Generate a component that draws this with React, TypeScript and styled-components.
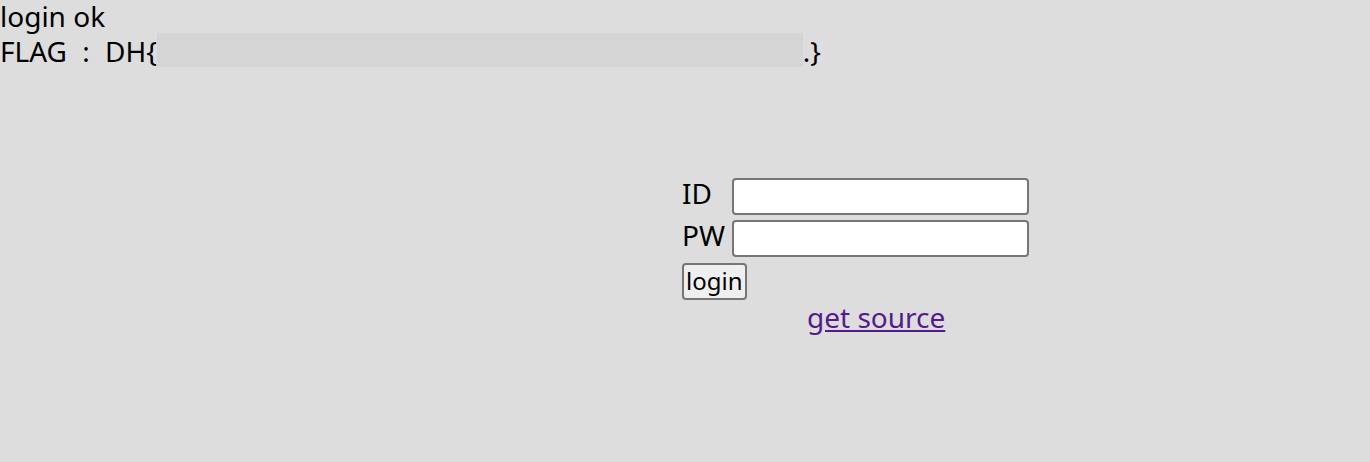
import React from 'react'
import styled, { createGlobalStyle } from 'styled-components'

const GlobalStyle = createGlobalStyle`
  html, body {
    margin: 0;
    background: #dddddd;
  }
  body {
    font-family: 'Noto Sans', 'Open Sans', sans-serif;
    font-size: 28px;
    color: #000;
  }
`

const Page = styled.div`
  min-height: 462px;
`

const Line = styled.div<{ $first?: boolean }>`
  line-height: ${(p) => (p.$first ? '32px' : '38px')};
  white-space: nowrap;
  word-spacing: ${(p) => (p.$first ? 'normal' : '8px')};
`

const Redacted = styled.span<{ $width: number }>`
  display: inline-block;
  width: ${(p) => p.$width}px;
  height: 34px;
  margin-top: 1px;
  vertical-align: top;
  background: #d5d5d5;
`

const FormWrap = styled.div`
  margin: 108px 0 0 calc(50% - 3px);
`

const Grid = styled.div`
  display: grid;
  grid-template-columns: 50px 296px;
  row-gap: 5px;
  align-items: start;
`

const Label = styled.label`
  font-size: 28px;
  line-height: 30px;
`

const Input = styled.input`
  box-sizing: border-box;
  width: 297px;
  height: 37px;
  border: 2px solid #767676;
  border-radius: 4px;
  background: #fff;
  font-size: 20px;
`

const ButtonCell = styled.div`
  margin-top: -2px;
`

const Button = styled.button`
  box-sizing: border-box;
  height: 37px;
  padding: 0 2px;
  border: 2px solid #767676;
  border-radius: 4px;
  background: #efefef;
  font-family: 'Noto Sans', sans-serif;
  font-size: 24px;
  line-height: 30px;
  color: #000;
`

const Source = styled.a`
  display: block;
  padding-left: 125px;
  color: #551a8b;
  text-decoration: underline;
  font-size: 28px;
  line-height: 34px;
`

export default function App() {
  return (
    <Page>
      <GlobalStyle />
      <Line $first>login ok</Line>
      <Line>
        FLAG : DH{'{'}
        <Redacted $width={646} />.{'}'}
      </Line>
      <FormWrap>
        <Grid>
          <Label>ID</Label>
          <Input type='text' />
          <Label>PW</Label>
          <Input type='password' />
          <ButtonCell>
            <Button>login</Button>
          </ButtonCell>
        </Grid>
        <Source href='#'>get source</Source>
      </FormWrap>
    </Page>
  )
}
